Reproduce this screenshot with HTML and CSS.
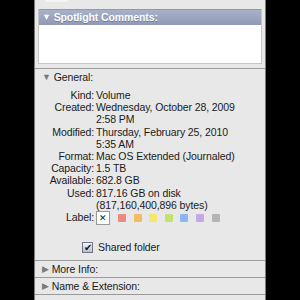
FILE: index.html
```html
<!DOCTYPE html>
<html lang="en">
<head>
    <meta charset="UTF-8">
    <title>Macintosh HD Info</title>
    <link rel="stylesheet" href="styles.css">
</head>
<body>
    <div class="panel">
        <div class="top-stub"></div>

        <section class="spotlight">
            <div class="spotlight-head"><span class="tri">&#9660;</span> Spotlight Comments:</div>
            <div class="spotlight-text"></div>
        </section>

        <section class="group open">
            <div class="group-head"><span class="tri">&#9660;</span> General:</div>
            <div class="info">
                <div class="key">Kind:</div><div class="val">Volume</div>
                <div class="key">Created:</div><div class="val">Wednesday, October 28, 2009<br>2:58 PM</div>
                <div class="key">Modified:</div><div class="val">Thursday, February 25, 2010<br>5:35 AM</div>
                <div class="key">Format:</div><div class="val">Mac OS Extended (Journaled)</div>
                <div class="key">Capacity:</div><div class="val">1.5 TB</div>
                <div class="key">Available:</div><div class="val">682.8 GB</div>
                <div class="key">Used:</div><div class="val">817.16 GB on disk<br>(817,160,400,896 bytes)</div>
                <div class="key label-key">Label:</div>
                <div class="val labels">
                    <span class="label-none">&#10005;</span>
                    <span class="swatch red"></span>
                    <span class="swatch orange"></span>
                    <span class="swatch yellow"></span>
                    <span class="swatch green"></span>
                    <span class="swatch blue"></span>
                    <span class="swatch purple"></span>
                    <span class="swatch gray"></span>
                </div>
            </div>
            <label class="shared">
                <span class="checkbox">&#10004;</span>
                Shared folder
            </label>
        </section>

        <section class="group">
            <div class="group-head"><span class="tri">&#9654;</span> More Info:</div>
        </section>
        <section class="group">
            <div class="group-head"><span class="tri">&#9654;</span> Name &amp; Extension:</div>
        </section>
        <section class="group"></section>
    </div>
</body>
</html>
```

FILE: styles.css
```css
body {
    margin: 0;
    background: #000;
    font-family: "Liberation Sans", Arial, sans-serif;
    font-size: 10.5px;
    letter-spacing: -0.1px;
    color: #1a1a1a;
}
.panel {
    margin-left: 34px;
    width: 230px;
    height: 300px;
    overflow: hidden;
    background: #e8e8e8;
    border-left: 1px solid #7a7a7a;
    border-right: 1px solid #7a7a7a;
}
.top-stub {
    width: 24px;
    height: 2px;
    margin-left: 10px;
    background: #f4f4f4;
    border-radius: 0 0 3px 3px;
}
.spotlight {
    margin: 7px 3px 0;
    border: 1px solid #c6c6c6;
    background: #fff;
}
.spotlight-head {
    height: 15px;
    line-height: 15px;
    padding-left: 3px;
    color: #fff;
    font-weight: bold;
    letter-spacing: -0.1px;
    text-shadow: 0 1px 0 rgba(60,70,100,0.4);
    background: linear-gradient(#a8b1ca, #8f9ab6);
    border-top: 1px solid #8d98b4;
    margin-top: -1px;
}
.spotlight-head .tri {
    font-size: 9px;
    vertical-align: 1px;
    color: #fff;
}
.spotlight-text {
    height: 38px;
}
.group {
    margin-top: 4px;
    border-top: 1px solid #9a9a9a;
}
.group + .group {
    margin-top: 0;
}
.group-head {
    height: 16px;
    line-height: 17px;
    padding-left: 7px;
}
.group-head .tri {
    font-size: 9px;
    color: #7a7a7a;
    vertical-align: 1px;
}
.info {
    display: grid;
    grid-template-columns: 59px 1fr;
    column-gap: 2px;
    line-height: 12.2px;
    margin-top: 4px;
}
.key {
    text-align: right;
}
.labels {
    display: flex;
    align-items: center;
    height: 13px;
}
.label-none {
    width: 12px;
    height: 12px;
    border: 1px solid #999;
    background: #fff;
    font-size: 9px;
    line-height: 12px;
    text-align: center;
    margin-right: 8px;
}
.swatch {
    width: 8px;
    height: 8px;
    border-radius: 1px;
    margin-right: 7.6px;
}
.red { background: #ec8a80; }
.orange { background: #f2bc62; }
.yellow { background: #f3e86d; }
.green { background: #c5e270; }
.blue { background: #8cb6f2; }
.purple { background: #c8a7e6; }
.gray { background: #b5b5b5; }
.shared {
    display: flex;
    align-items: center;
    gap: 5px;
    margin: 17px 0 7px 47px;
}
.checkbox {
    width: 9px;
    height: 9px;
    border: 1px solid #6f7585;
    background: linear-gradient(#f4f5f8, #b9bfcc);
    font-size: 10px;
    line-height: 9px;
    color: #111;
    text-align: center;
}
```
